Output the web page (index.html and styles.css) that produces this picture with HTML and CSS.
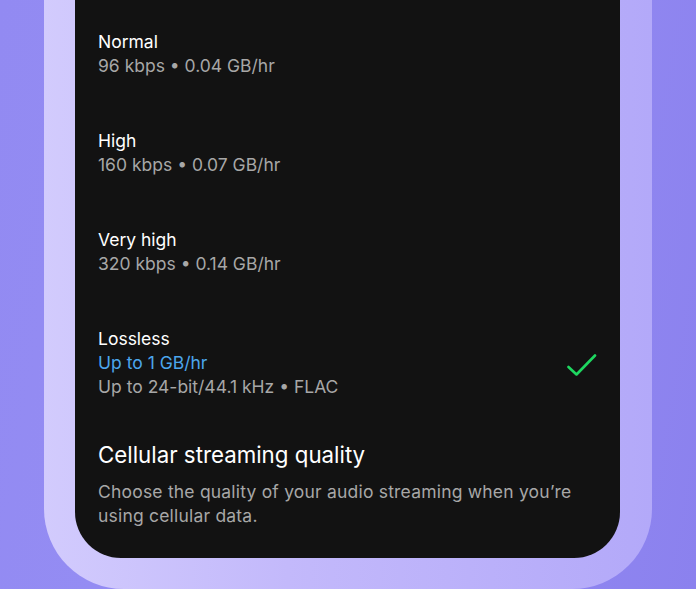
FILE: index.html
```html
<!DOCTYPE html>
<html>
<head>
<meta charset="utf-8">
<link rel="stylesheet" href="styles.css">
</head>
<body>
<div class="frame">
  <div class="screen">
    <div class="option">
      <div class="text">
        <div class="title">Normal</div>
        <div class="sub">96 kbps • 0.04 GB/hr</div>
      </div>
    </div>
    <div class="option">
      <div class="text">
        <div class="title">High</div>
        <div class="sub">160 kbps • 0.07 GB/hr</div>
      </div>
    </div>
    <div class="option">
      <div class="text">
        <div class="title">Very high</div>
        <div class="sub">320 kbps • 0.14 GB/hr</div>
      </div>
    </div>
    <div class="option">
      <div class="text">
        <div class="title">Lossless</div>
        <div class="sub blue">Up to 1 GB/hr</div>
        <div class="sub">Up to 24-bit/44.1 kHz • FLAC</div>
      </div>
      <svg class="check" width="30" height="24" viewBox="0 0 30 24">
        <path d="M1.5 14 L9.5 21.5 L28 2.5" fill="none" stroke="#1ed760" stroke-width="2.6" stroke-linecap="round" stroke-linejoin="round"/>
      </svg>
    </div>
    <div class="section">
      <div class="heading">Cellular streaming quality</div>
      <div class="desc">Choose the quality of your audio streaming when you’re using cellular data.</div>
    </div>
  </div>
</div>
</body>
</html>
```

FILE: styles.css
```css
html, body {
  margin: 0;
  padding: 0;
  height: 100%;
  overflow: hidden;
}
body {
  background: linear-gradient(100deg, #928af2 0%, #968ef4 50%, #8b81ee 100%);
  font-family: "Inter", "Noto Sans", sans-serif;
}
.frame {
  margin-left: 44px;
  width: 608px;
  box-sizing: border-box;
  padding: 0 32px 31px 31px;
  background: linear-gradient(90deg, #d2cbfd 0%, #c3b9fb 40%, #b3a9f9 100%);
  border-radius: 0 0 80px 80px;
}
.screen {
  background: #121212;
  border-radius: 0 0 46px 46px;
  padding: 30px 23px 30px 23px;
  display: flex;
  flex-direction: column;
  gap: 51px;
}
.option {
  display: flex;
  align-items: center;
  justify-content: space-between;
}
.title {
  color: #ffffff;
  font-size: 17.5px;
  line-height: 24px;
}
.sub {
  color: #a7a7a7;
  font-size: 17.5px;
  line-height: 24px;
}
.sub.blue {
  color: #4ca6ec;
}
.check {
  margin-top: 4px;
}
.section {
  margin-top: -10px;
  display: flex;
  flex-direction: column;
  gap: 10px;
}
.heading {
  color: #ffffff;
  font-size: 22.3px;
  line-height: 30px;
}
.desc {
  color: #a7a7a7;
  font-size: 17.5px;
  line-height: 24px;
  letter-spacing: 0.2px;
  max-width: 490px;
}
```
